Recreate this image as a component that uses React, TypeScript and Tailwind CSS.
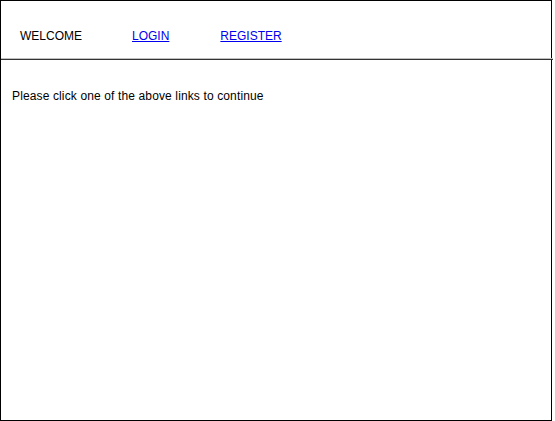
import React from "react";

export default function App() {
  return (
    <div className="w-[552px] h-[421px] border border-black bg-white text-[12px] leading-[14px] text-black" style={{ fontFamily: '"Liberation Sans", Arial, sans-serif' }}>
      <div className="flex items-start pl-[19px] pt-[28px] pb-[15px]">
        <span>WELCOME</span>
        <a href="#" className="ml-[50px] text-[#0000ee] underline">LOGIN</a>
        <a href="#" className="ml-[51px] text-[#0000ee] underline">REGISTER</a>
      </div>
      <div className="w-[552px] h-[2px] border-t border-t-[#c0c0c0] border-b border-b-[#333333]" />
      <div className="pl-[11px] pt-[29px] tracking-[0.13px]">
        Please click one of the above links to continue
      </div>
    </div>
  );
}
